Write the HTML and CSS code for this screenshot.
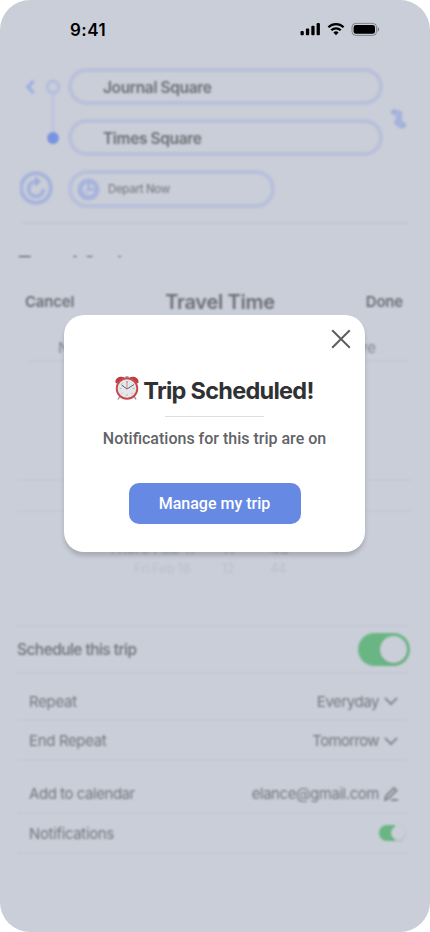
FILE: index.html
```html
<!DOCTYPE html>
<html lang="en">
<head>
<meta charset="utf-8">
<meta name="viewport" content="width=device-width, initial-scale=1">
<title>Trip Scheduled</title>
<link rel="stylesheet" href="styles.css">
</head>
<body>
<main class="phone">
  <header class="status">
    <span class="time">9:41</span>
    <svg class="status-icons" width="80" height="16" viewBox="0 0 80 16">
      <g fill="#000"><rect x="0.5" y="9" width="3.3" height="4.3" rx="1"/><rect x="5.9" y="6.5" width="3.3" height="6.8" rx="1"/><rect x="11.3" y="3.8" width="3.3" height="9.5" rx="1"/><rect x="16.6" y="1" width="3.3" height="12.3" rx="1"/></g>
      <g fill="none" stroke="#000" stroke-width="2.2"><path d="M28.4 5.3a10.8 10.8 0 0 1 15.2 0"/><path d="M31.3 8.3a6.6 6.6 0 0 1 9.4 0"/></g>
      <path d="M36 13.2l-2.6-2.7a3.8 3.8 0 0 1 5.2 0z"/>
      <rect x="52" y="1.4" width="24.6" height="12" rx="3.8" fill="none" stroke="#000" stroke-opacity=".35"/>
      <rect x="53.6" y="3" width="21.4" height="8.8" rx="2.4"/>
      <path d="M77.7 5.3v4.4c.9-.4 1.4-1.2 1.4-2.2s-.5-1.8-1.4-2.2z" fill-opacity=".4"/>
    </svg>
  </header>

  <div class="backdrop">
    <section class="route">
      <svg class="rail" width="49" height="88" viewBox="0 0 49 88">
        <path d="M13.5 13l-5.500 6 5.500 6" fill="none" stroke="#a2b1e0" stroke-width="3.500"/>
        <path d="M33 26v38" stroke="#bbc4df" stroke-width="3"/>
        <circle cx="33" cy="19" r="5.800" fill="none" stroke="#b4bee0" stroke-width="3.200"/>
        <circle cx="33" cy="70" r="5.900" fill="#7893e2"/>
      </svg>
      <div class="fields">
        <div class="pill">Journal Square</div>
        <div class="pill">Times Square</div>
      </div>
      <svg class="swap" width="22" height="24" viewBox="0 0 22 24">
        <path d="M5 5h5.500v4M6 15h5.500v4h4" fill="none" stroke="#a7b3dc" stroke-width="4" stroke-linejoin="round"/>
        <path d="M11 4.500v14.500" stroke="#a7b3dc" stroke-width="6.500"/>
        <path d="M7 1L2 5 7 9.500zM14 13.500l5 4.500-5 4.500z" fill="#a0afdc"/>
      </svg>
    </section>
    <section class="depart">
      <svg width="34" height="36" viewBox="0 0 34 36">
        <circle cx="16" cy="18" r="14.800" fill="none" stroke="#a8b4dc" stroke-width="4"/>
        <path d="M23.500 19a7.500 7.500 0 1 1-7-7.500" fill="none" stroke="#a8b4dc" stroke-width="4.200"/>
        <path d="M15 6l6 5.500-6 5z" fill="#9dacdc"/>
      </svg>
      <div class="pill pill-time">
        <svg width="23" height="23" viewBox="0 0 23 23"><circle cx="11.500" cy="11.500" r="8.500" fill="none" stroke="#a8b4dc" stroke-width="5"/><path d="M11.500 4v7.500h6.500" fill="none" stroke="#a8b4dc" stroke-width="3"/><path d="M5 11.500h6.500v6.500H9L5 14z" fill="#a8b4dc" fill-opacity=".35"/></svg>
        <span>Depart Now</span>
      </div>
    </section>
    <div class="route-line"></div>
    <h2 class="options">Travel Options</h2>

    <section class="sheet">
      <div class="sheet-head"><span>Cancel</span><h3>Travel Time</h3><span>Done</span></div>
      <div class="tabs"><span>Now</span><span>Arrive</span></div>
      <div class="picker">
        <div class="selection"></div>
        <div class="pick near"><span>Thurs Feb 17</span><span>11</span><span>43</span></div>
        <div class="pick"><span>Fri Feb 18</span><span>12</span><span>44</span></div>
      </div>
      <div class="row schedule"><span>Schedule this trip</span><i class="toggle"></i></div>
      <div class="row repeat"><span>Repeat</span><span class="value">Everyday
        <svg width="14" height="14" viewBox="0 0 14 14"><path d="M1 4l6 6 6-6"/></svg></span></div>
      <div class="row end"><span>End Repeat</span><span class="value tomorrow">Tomorrow
        <svg width="14" height="14" viewBox="0 0 14 14"><path d="M1 4l6 6 6-6"/></svg></span></div>
      <div class="row calendar"><span>Add to calendar</span><span class="value">elance@gmail.com
        <svg width="14" height="14" viewBox="0 0 14 14"><path d="M1 13l1-4 8-8 2.500 2.500-8 8zM7 13h7"/></svg></span></div>
      <div class="row notify"><span>Notifications</span><i class="toggle small"></i></div>
    </section>
  </div>

  <section class="modal" role="dialog" aria-labelledby="trip-title">
    <svg class="close" width="20" height="20" viewBox="0 0 20 20"><path d="M1.200 1.200l17.600 17.600M18.800 1.200L1.200 18.800" stroke="#5d5e60" stroke-width="2"/></svg>
    <div class="title">
      <svg width="24" height="25" viewBox="0 0 24 25">
        <path d="M5 20l-2 3.500M19 20l2 3.500" stroke="#999ba1" stroke-width="1.500"/>
        <path d="M10.500 0h3v4h-3z" fill="#aaa"/>
        <path d="M.5 6.500C0 2 5-.5 9.500 1.500L1.500 7.500zM23.500 6.500C24 2 19-.5 14.500 1.500l8 6z" fill="#bd3c40"/>
        <circle cx="12" cy="12.500" r="10.300" fill="#e4e6e9" stroke="#c8494b" stroke-width="1.900"/>
        <g stroke="#a2a4aa" stroke-width=".7"><path d="M12 5v2M12 18v2M4.500 12.500h2M17.500 12.500h2M6.700 7.200l1 1M17.300 17.800l-1-1M6.700 17.800l1-1"/></g>
        <path d="M6.500 9L12 13l7-4.500" fill="none" stroke="#5e6368" stroke-width="1"/>
        <path d="M12 13V5" stroke="#d06060" stroke-width=".7"/>
      </svg>
      <h1 id="trip-title">Trip Scheduled!</h1>
    </div>
    <div class="rule"></div>
    <p>Notifications for this trip are on</p>
    <button type="button">Manage my trip</button>
  </section>
</main>
</body>
</html>
```
FILE: styles.css
```css
* { box-sizing: border-box; }
body { margin: 0; background: #fff; font-family: Inter, "Liberation Sans", sans-serif; }
h1, h2, h3, p { margin: 0; }
svg { display: block; flex: none; }
.phone { position: relative; width: 430px; height: 932px; background: #caced8; border-radius: 30px; overflow: hidden; }
.status { height: 68px; padding: 20px 50px 0 70px; display: flex; justify-content: space-between; align-items: flex-start; }
.time { font-size: 17px; line-height: 20px; font-weight: 600; letter-spacing: .5px; }
.status-icons { margin-top: 2px; }
.backdrop { filter: blur(1.2px); color: #6c6e75; }
.route { display: flex; padding-left: 20px; height: 88px; }
.fields { display: flex; flex-direction: column; gap: 14px; width: 315px; margin-left: -1px; }
.pill { height: 37px; border: 4px solid #b8c0db; border-radius: 19px; display: flex; align-items: center; padding: 1px 0 0 31px; font-size: 15.500px; font-weight: 600; letter-spacing: -.37px; }
.swap { margin: 39px 0 0 5px; }
.depart { display: flex; gap: 14px; padding: 14px 20px 0; height: 55px; }
.pill-time { width: 207px; height: 38px; padding: 0 0 0 5px; gap: 8px; font-size: 11.500px; font-weight: 500; letter-spacing: -.35px; color: #7e8088; }
.route-line { height: 2px; margin: 11px 22px 0; background: #c2c6d3; }
.options { height: 33px; padding: 26px 18px 0; font-size: 20px; line-height: 29px; font-weight: 700; letter-spacing: -.15px; overflow: hidden; color: #43464b; }
.sheet-head { height: 67px; padding: 22px 27px 0 25px; display: grid; grid-template-columns: 1fr auto 1fr; align-items: center; font-size: 15px; font-weight: 600; letter-spacing: -.2px; }
.sheet-head span:last-child { text-align: right; }
.sheet-head h3 { font-size: 20px; font-weight: 600; letter-spacing: -.3px; margin-left: 12px; }
.tabs { height: 38px; margin: 0 23px 0 27px; padding: 15px 31px 0; display: flex; justify-content: space-between; font-size: 15px; line-height: 18px; border-bottom: 2px solid #c2c8da; color: #85878f; }
.picker { height: 263px; padding-top: 117px; }
.selection { height: 33px; margin: 0 18px; border: solid #c4c9d8; border-width: 2px 0; }
.pick { width: 154px; margin-left: 134px; height: 18px; display: grid; grid-template-columns: 88px 48px 20px; font-size: 12.500px; line-height: 18px; color: #bbc0cd; white-space: nowrap; }
.pick.near { width: 180px; margin: 28px 0 2px 108px; grid-template-columns: 114px 48px 20px; font-size: 15px; color: #a7abb5; }
.row { display: flex; justify-content: space-between; align-items: center; height: 40px; margin: 0 22px 0 18px; padding: 0 10px 0 11px; border-bottom: 2px solid #c3c8d7; font-size: 15px; letter-spacing: -.45px; color: #75777e; }
.schedule { height: 49px; border-top: 2px solid #c3c8d7; padding: 0; margin-left: 17px; font-weight: 500; font-size: 15.500px; letter-spacing: -.55px; color: #6f7178; }
.repeat { height: 47px; padding-top: 9px; }
.end { padding-top: 1px; }
.repeat > span:first-child { letter-spacing: -.3px; }
.end > span:first-child { letter-spacing: -.35px; }
.calendar { height: 53px; padding-top: 14px; }
.notify > span { letter-spacing: -.35px; }
.value { display: flex; align-items: center; gap: 5px; }
.value.tomorrow { letter-spacing: -.65px; }
.value svg { fill: none; stroke: #85888f; stroke-width: 2; }
.toggle { flex: none; width: 52px; height: 33px; border-radius: 17px; background: #69b684; display: flex; justify-content: flex-end; align-items: center; padding-right: 3px; margin-right: -2px; }
.toggle::after { content: ""; width: 27px; height: 27px; border-radius: 50%; background: #caced8; box-shadow: 0 1px 2px #65866f66; }
.toggle.small { width: 26px; height: 16px; padding: 0; margin-right: -7px; background: linear-gradient(90deg, #69b684 62%, #caced8 62%); }
.toggle.small::after { width: 14px; height: 14px; }
.modal { position: absolute; left: 64px; top: 315px; width: 301px; height: 237px; border-radius: 20px; background: #fff; box-shadow: 0 4px 4px #0000002b; display: flex; flex-direction: column; align-items: center; }
.close { align-self: flex-end; margin: 14px 14px 0 0; }
.title { display: flex; gap: 4px; margin-top: 26px; height: 31px; align-items: flex-start; }
.title svg { margin-top: 1px; }
h1 { font-size: 23.500px; line-height: 31px; font-weight: 700; letter-spacing: -.73px; color: #303133; white-space: nowrap; }
.rule { width: 99px; height: 1px; margin-top: 10px; background: #dedede; }
.modal p { margin-top: 12px; font: 500 16px/20px Roboto, sans-serif; color: #626366; }
.modal button { margin-top: 34px; width: 172px; height: 41px; border: 0; border-radius: 10px; background: #6689e3; color: #fff; font: 500 16px/20px Roboto, sans-serif; }
```
